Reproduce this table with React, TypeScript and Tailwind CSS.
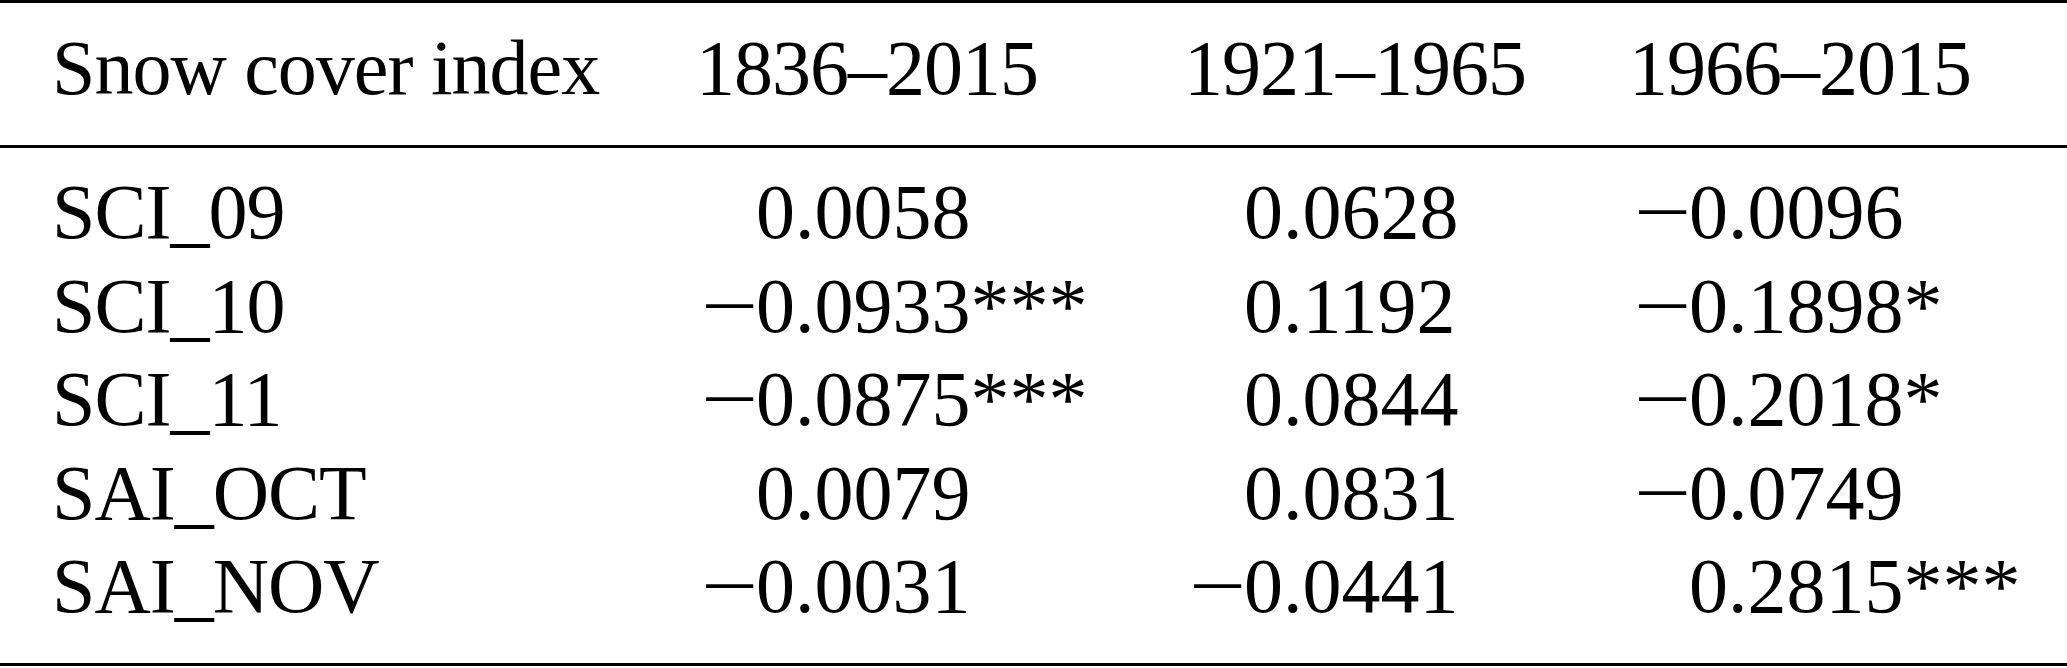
const rows: { label: string; values: [string, string][] }[] = [
  { label: "SCI_09", values: [["0.0058", ""], ["0.0628", ""], ["−0.0096", ""]] },
  { label: "SCI_10", values: [["−0.0933", "***"], ["0.1192", ""], ["−0.1898", "*"]] },
  { label: "SCI_11", values: [["−0.0875", "***"], ["0.0844", ""], ["−0.2018", "*"]] },
  { label: "SAI_OCT", values: [["0.0079", ""], ["0.0831", ""], ["−0.0749", ""]] },
  { label: "SAI_NOV", values: [["−0.0031", ""], ["−0.0441", ""], ["0.2815", "***"]] },
];

const headers = ["1836–2015", "1921–1965", "1966–2015"];

function Num({ value, stars }: { value: string; stars: string }) {
  const negative = value.startsWith("−");
  const digits = negative ? value.slice(1) : value;
  return (
    <div className="flex whitespace-nowrap">
      <span className="w-[55px] shrink-0">
        {negative && <span className="inline-block origin-left scale-x-[1.3]">−</span>}
      </span>
      <span>{digits}</span>
      <span>{stars}</span>
    </div>
  );
}

export default function App() {
  const grid = "grid grid-cols-[649px_488px_445px_1fr] pl-[52px]";
  return (
    <div
      className="h-[668px] w-[2067px] bg-white text-[78px] text-black"
      style={{ fontFamily: '"Liberation Serif", "Times New Roman", serif' }}
    >
      <div className="border-t-[3px] border-b-[3px] border-black">
        <div className={`${grid} pt-[18px] pb-[30px] leading-[94px] tracking-[-1px] border-b-[3px] border-black`}>
          <div className="whitespace-nowrap">Snow cover index</div>
          {headers.map((h) => (
            <div key={h} className="-ml-[5px] whitespace-nowrap">
              {h}
            </div>
          ))}
        </div>
        <div className="pt-[17px] pb-[30px] leading-[93.5px]">
          {rows.map((r) => (
            <div key={r.label} className={grid}>
              <div className="whitespace-nowrap tracking-[-1px]">{r.label}</div>
              {r.values.map(([v, s], i) => (
                <Num key={i} value={v} stars={s} />
              ))}
            </div>
          ))}
        </div>
      </div>
    </div>
  );
}
